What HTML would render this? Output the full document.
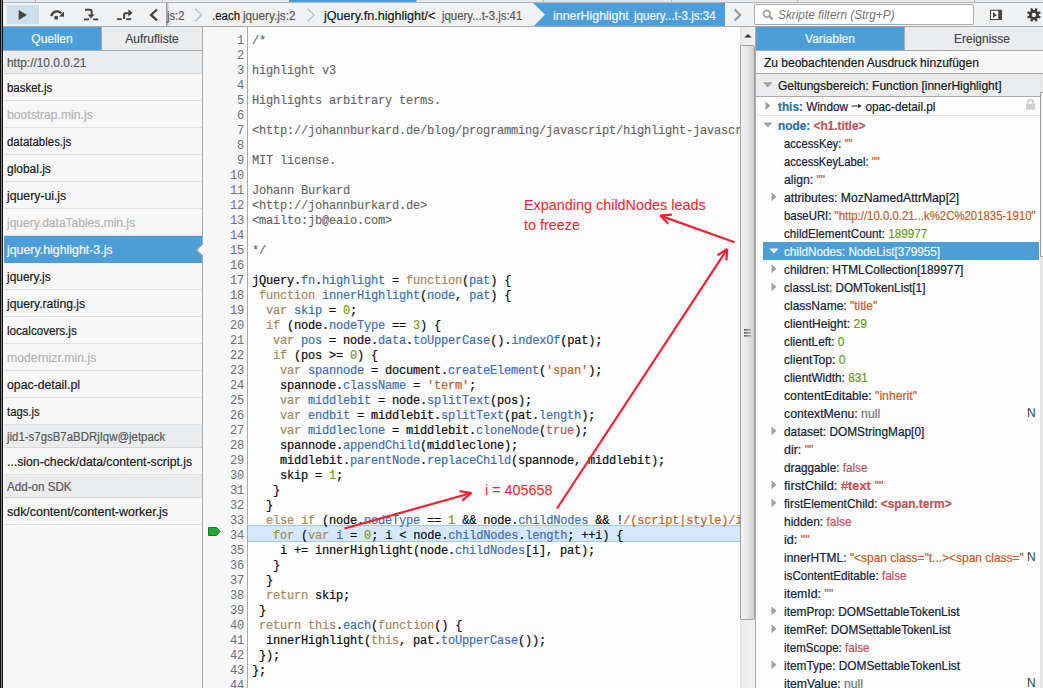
<!DOCTYPE html>
<html><head><meta charset="utf-8"><style>
*{margin:0;padding:0;box-sizing:border-box}
html,body{width:1043px;height:688px;overflow:hidden;background:#fcfcfc;font-family:"Liberation Sans",sans-serif;font-size:12px;color:#18191a}
.src,.grp,.row,.crumb,.tab{-webkit-text-stroke:0.2px currentColor}
.a{position:absolute}
#lb{left:0;top:0;width:3px;height:688px;background:linear-gradient(to right,#0a0a0a 0 1px,#8c8c8c 1px 2px,#0a0a0a 2px 3px)}
#strip{left:3px;top:0;width:1040px;height:3px;background:#e6e7e8;border-bottom:1px solid #b4b4b4}
.sep{top:0;width:1px;height:2px;background:#b8b8b8}
#tb{left:3px;top:3px;width:1040px;height:24px;background:#f0f1f2;border-bottom:1px solid #aaa}
#lp{left:3px;top:27px;width:200px;height:661px;background:#f7f7f7;border-right:1px solid #aaa}
.tab{top:0;height:24px;line-height:25px;text-align:center;background:#ebeced;border-bottom:1px solid #aaa;color:#45484c}
.tab.sel{background:#4c9ed9;color:#f5f7fa}
.src{left:0;width:199px;height:27px;line-height:28px;padding-left:4px;border-bottom:1px solid #e2e2e2;color:#18191a;white-space:nowrap}
.grp{left:0;width:199px;height:23px;line-height:24px;padding-left:4px;background:#ebeced;border-bottom:1px solid #d8d8d8;color:#585959;white-space:nowrap}
.src.sel{background:#4c9ed9;color:#f5f7fa;border-bottom-color:#4c9ed9}
.dim{color:#b4b4b4}
#gut{left:203px;top:27px;width:45px;height:661px;background:#f7f7f7;border-right:1px solid #aaa}
#code{left:248px;top:27px;width:492px;height:661px;background:#fcfcfc;overflow:hidden}
.mono{-webkit-text-stroke:0.2px currentColor;font-family:"Liberation Mono",monospace;font-size:12px;letter-spacing:-0.2px;white-space:pre;height:15px;line-height:15px}
.ln{left:0;width:41px;text-align:right;color:#667380;-webkit-text-stroke:0}
.cl{left:4px;color:#0c0c10}
.cm{color:#636363;-webkit-text-stroke:0.1px #636363}
.k{color:#a68a5b}
.p{color:#3e6fb4}
.n{color:#7d9a1e}
.s{color:#c05f2a}
.at{color:#bf5656}
#sb{left:740px;top:27px;width:15px;height:661px;background:linear-gradient(to right,#dedede 0,#ebebeb 2px,#efefef 50%,#f1f1f1 100%)}
#rp{left:755px;top:27px;width:288px;height:661px;background:#fcfcfc;border-left:1px solid #aaa}
.row{height:18px;line-height:20px;white-space:nowrap;font-size:11.9px}
.nm{color:#142038}
.vn{color:#2f70a8;font-weight:bold}
.dn{color:#bf5656;font-weight:bold}
.num{color:#6b9b22}
.str{color:#c3602a}
.bool{color:#c05560}
.nul{color:#757873}
.crumb{top:5px;height:23px;line-height:23px;white-space:nowrap}
.fl{color:#585959}
</style></head><body>
<div class="a" id="strip"></div>
<div class="a sep" style="left:35px"></div>
<div class="a sep" style="left:162px"></div>
<div class="a sep" style="left:289px"></div>
<div class="a sep" style="left:416px"></div>
<div class="a sep" style="left:543px"></div>
<div class="a sep" style="left:671px"></div>
<div class="a sep" style="left:797px"></div>
<div class="a sep" style="left:974px"></div>
<div class="a" style="left:289px;top:0;width:127px;height:2px;background:#4c9ed9"></div>
<div class="a" id="tb"></div>
<div class="a" style="left:7px;top:5px;width:32px;height:19px;background:#cddfed"></div>
<svg class="a" style="left:0;top:0" width="1043" height="27">
<g fill="#444">
<path d="M18.7 10 L18.7 20 L27 15 Z"/>
<circle cx="56.1" cy="17.8" r="2"/>
<path d="M51.2 16.3 A6 6 0 0 1 61.5 13.3" fill="none" stroke="#444" stroke-width="2.2"/>
<path d="M64 11.4 L64 16.7 L59 16.5 Z"/>
<path d="M85 9.7 L90 9.7 Q91.6 9.7 91.6 11.3 L91.6 15" fill="none" stroke="#444" stroke-width="2"/>
<path d="M87.4 14.4 L94.6 14.4 L91 18.2 Z"/>
<rect x="84" y="18.5" width="5" height="1.8"/>
<rect x="93.2" y="18.5" width="5" height="1.8"/>
<rect x="116.9" y="18.3" width="5" height="1.8"/>
<rect x="126.1" y="18.3" width="5" height="1.8"/>
<path d="M124.1 19 L124.1 14.5 Q124.1 13.3 125.5 13.3 L129 13.3" fill="none" stroke="#444" stroke-width="2"/>
<path d="M128.4 9.2 L132.6 12.9 L128.4 16.5 Z"/>
<path d="M157 9.5 L151 14.9 L157 20.4" fill="none" stroke="#444" stroke-width="2.2"/>
<path d="M734.6 9.3 L740.2 15 L734.6 20.7" fill="none" stroke="#999" stroke-width="2.1"/>
<path d="M195 8.5 L201.5 15 L195 21.5" fill="none" stroke="#bdbdbd" stroke-width="1.3"/>
<path d="M307.5 8.5 L314 15 L307.5 21.5" fill="none" stroke="#bdbdbd" stroke-width="1.3"/>
</g>
<rect x="990.5" y="10.3" width="11" height="9.2" fill="#fff" stroke="#4a4a45" stroke-width="1.1"/>
<rect x="998.2" y="10" width="3.5" height="9.8" fill="#4a4a45"/>
<path d="M993 12 L993 17.9 L996.8 14.9 Z" fill="#4a4a45"/>
</svg>
<svg class="a" style="left:0;top:0" width="1043" height="27"><path d="M1038.56 15.52 L1040.79 16.61 L1039.98 18.57 L1037.63 17.75 L1036.75 18.63 L1037.57 20.98 L1035.61 21.79 L1034.52 19.56 L1033.28 19.56 L1032.19 21.79 L1030.23 20.98 L1031.05 18.63 L1030.17 17.75 L1027.82 18.57 L1027.01 16.61 L1029.24 15.52 L1029.24 14.28 L1027.01 13.19 L1027.82 11.23 L1030.17 12.05 L1031.05 11.17 L1030.23 8.82 L1032.19 8.01 L1033.28 10.24 L1034.52 10.24 L1035.61 8.01 L1037.57 8.82 L1036.75 11.17 L1037.63 12.05 L1039.98 11.23 L1040.79 13.19 L1038.56 14.28 Z" fill="#3d3d3d"/><circle cx="1033.9" cy="14.9" r="4.9" fill="#3d3d3d"/><circle cx="1033.9" cy="14.9" r="2.2" fill="#f0f1f2"/></svg>
<div class="a" style="left:166px;top:3px;width:3px;height:23px;background:linear-gradient(to right,rgba(0,0,0,.42),rgba(0,0,0,0))"></div>
<div class="a crumb fl" style="left:166.5px;font-size:12px;transform:scaleX(0.933);transform-origin:0 0">js:2</div>
<div class="a crumb" style="left:211.5px;font-size:12px;transform:scaleX(0.958);transform-origin:0 0">.each</div>
<div class="a crumb fl" style="left:242.5px;font-size:12px;transform:scaleX(0.975);transform-origin:0 0">jquery.js:2</div>
<div class="a crumb" style="left:323.5px;font-size:12px;transform:scaleX(1.050);transform-origin:0 0">jQuery.fn.highlight/&lt;</div>
<div class="a crumb fl" style="left:442.3px;font-size:12px;transform:scaleX(0.950);transform-origin:0 0">jquery...t-3.js:41</div>
<svg class="a" style="left:533px;top:3px" width="192" height="23"><path d="M0 0 L192 0 L192 23 L1 23 L12 11.5 Z" fill="#4c9ed9"/></svg>
<div class="a crumb" style="left:553px;color:#f5f7fa;font-size:12px;transform:scaleX(1.033);transform-origin:0 0">innerHighlight</div>
<div class="a crumb" style="left:634.3px;color:#f5f7fa;font-size:12px;transform:scaleX(0.967);transform-origin:0 0">jquery...t-3.js:34</div>
<div class="a" style="left:754px;top:4px;width:220px;height:21px;background:#fff;border:1px solid #aaa;border-radius:2px"></div>
<svg class="a" style="left:760px;top:8px" width="16" height="14"><circle cx="6.8" cy="5.8" r="3.3" fill="none" stroke="#a3a3a3" stroke-width="1.8"/><path d="M9.2 8.2 L12.6 11.4" stroke="#a3a3a3" stroke-width="2.4"/></svg>
<div class="a" style="left:778px;top:5px;height:21px;line-height:21px;font-style:italic;color:#737373;white-space:nowrap;transform:scaleX(0.985);transform-origin:0 0">Skripte filtern (Strg+P)</div>
<div class="a" id="lp">
 <div class="a tab sel" style="left:0;width:98px">Quellen</div>
 <div class="a tab" style="left:98px;width:101px;border-left:1px solid #aaa">Aufrufliste</div>
 <div class="a grp" style="top:24px"><span style="display:inline-block;transform:scaleX(0.9912);transform-origin:0 0">http://10.0.0.21</span></div>
 <div class="a src" style="top:47px"><span style="display:inline-block;transform:scaleX(0.9532);transform-origin:0 0">basket.js</span></div>
 <div class="a src dim" style="top:74px"><span style="display:inline-block;transform:scaleX(1.0118);transform-origin:0 0">bootstrap.min.js</span></div>
 <div class="a src" style="top:101px"><span style="display:inline-block;transform:scaleX(0.9544);transform-origin:0 0">datatables.js</span></div>
 <div class="a src" style="top:128px"><span style="display:inline-block;transform:scaleX(0.9955);transform-origin:0 0">global.js</span></div>
 <div class="a src" style="top:155px"><span style="display:inline-block;transform:scaleX(1.0203);transform-origin:0 0">jquery-ui.js</span></div>
 <div class="a src dim" style="top:182px"><span style="display:inline-block;transform:scaleX(1.0016);transform-origin:0 0">jquery.dataTables.min.js</span></div>
 <div class="a src sel" style="top:209px"><span style="display:inline-block;transform:scaleX(1.0298);transform-origin:0 0">jquery.highlight-3.js</span></div>
 <div class="a src" style="top:236px"><span style="display:inline-block;transform:scaleX(0.9956);transform-origin:0 0">jquery.js</span></div>
 <div class="a src" style="top:263px"><span style="display:inline-block;transform:scaleX(1.0115);transform-origin:0 0">jquery.rating.js</span></div>
 <div class="a src" style="top:290px"><span style="display:inline-block;transform:scaleX(0.9681);transform-origin:0 0">localcovers.js</span></div>
 <div class="a src dim" style="top:317px"><span style="display:inline-block;transform:scaleX(1.0221);transform-origin:0 0">modernizr.min.js</span></div>
 <div class="a src" style="top:344px"><span style="display:inline-block;transform:scaleX(1.0225);transform-origin:0 0">opac-detail.pl</span></div>
 <div class="a src" style="top:371px"><span style="display:inline-block;transform:scaleX(0.9417);transform-origin:0 0">tags.js</span></div>
 <div class="a grp" style="top:398px"><span style="display:inline-block;transform:scaleX(0.9518);transform-origin:0 0">jid1-s7gsB7aBDRjIqw@jetpack</span></div>
 <div class="a src" style="top:421px"><span style="display:inline-block;transform:scaleX(1.0203);transform-origin:0 0">...sion-check/data/content-script.js</span></div>
 <div class="a grp" style="top:448px"><span style="display:inline-block;transform:scaleX(0.9687);transform-origin:0 0">Add-on SDK</span></div>
 <div class="a src" style="top:471px"><span style="display:inline-block;transform:scaleX(1.0365);transform-origin:0 0">sdk/content/content-worker.js</span></div>
</div>
<svg class="a" style="left:195px;top:243px" width="9" height="14"><path d="M8 0.5 L1.5 7 L8 13.5" fill="#fcfcfc" stroke="#9a9a9a" stroke-width="1.1"/><rect x="8" y="0" width="1" height="14" fill="#fcfcfc"/></svg>
<div class="a" id="gut"></div>
<div class="a" style="left:248px;top:525px;width:492px;height:17px;background:#d5e7fa;border-top:1px solid #9ccaf0;border-bottom:1px solid #9ccaf0"></div>
<div class="a mono ln" style="left:203px;top:34px">1</div>
<div class="a mono cl cm" style="left:252px;top:34px;max-width:488px;overflow:hidden">/*</div>
<div class="a mono ln" style="left:203px;top:49px">2</div>
<div class="a mono cl cm" style="left:252px;top:49px;max-width:488px;overflow:hidden"></div>
<div class="a mono ln" style="left:203px;top:64px">3</div>
<div class="a mono cl cm" style="left:252px;top:64px;max-width:488px;overflow:hidden">highlight v3</div>
<div class="a mono ln" style="left:203px;top:79px">4</div>
<div class="a mono cl cm" style="left:252px;top:79px;max-width:488px;overflow:hidden"></div>
<div class="a mono ln" style="left:203px;top:94px">5</div>
<div class="a mono cl cm" style="left:252px;top:94px;max-width:488px;overflow:hidden">Highlights arbitrary terms.</div>
<div class="a mono ln" style="left:203px;top:109px">6</div>
<div class="a mono cl cm" style="left:252px;top:109px;max-width:488px;overflow:hidden"></div>
<div class="a mono ln" style="left:203px;top:124px">7</div>
<div class="a mono cl cm" style="left:252px;top:124px;max-width:488px;overflow:hidden">&lt;http://johannburkard.de/blog/programming/javascript/highlight-javascript-text-higlighting-jquery-plugin.html&gt;</div>
<div class="a mono ln" style="left:203px;top:139px">8</div>
<div class="a mono cl cm" style="left:252px;top:139px;max-width:488px;overflow:hidden"></div>
<div class="a mono ln" style="left:203px;top:154px">9</div>
<div class="a mono cl cm" style="left:252px;top:154px;max-width:488px;overflow:hidden">MIT license.</div>
<div class="a mono ln" style="left:203px;top:169px">10</div>
<div class="a mono cl cm" style="left:252px;top:169px;max-width:488px;overflow:hidden"></div>
<div class="a mono ln" style="left:203px;top:184px">11</div>
<div class="a mono cl cm" style="left:252px;top:184px;max-width:488px;overflow:hidden">Johann Burkard</div>
<div class="a mono ln" style="left:203px;top:199px">12</div>
<div class="a mono cl cm" style="left:252px;top:199px;max-width:488px;overflow:hidden">&lt;http://johannburkard.de&gt;</div>
<div class="a mono ln" style="left:203px;top:214px">13</div>
<div class="a mono cl cm" style="left:252px;top:214px;max-width:488px;overflow:hidden">&lt;mailto:jb@eaio.com&gt;</div>
<div class="a mono ln" style="left:203px;top:229px">14</div>
<div class="a mono cl cm" style="left:252px;top:229px;max-width:488px;overflow:hidden"></div>
<div class="a mono ln" style="left:203px;top:244px">15</div>
<div class="a mono cl cm" style="left:252px;top:244px;max-width:488px;overflow:hidden">*/</div>
<div class="a mono ln" style="left:203px;top:259px">16</div>
<div class="a mono cl" style="left:252px;top:259px;max-width:488px;overflow:hidden"></div>
<div class="a mono ln" style="left:203px;top:274px">17</div>
<div class="a mono cl" style="left:252px;top:274px;max-width:488px;overflow:hidden">jQuery.<span class="p">fn</span>.<span class="p">highlight</span> = <span class="k">function</span>(<span class="p">pat</span>) {</div>
<div class="a mono ln" style="left:203px;top:289px">18</div>
<div class="a mono cl" style="left:252px;top:289px;max-width:488px;overflow:hidden"> <span class="k">function</span> <span class="p">innerHighlight</span>(<span class="p">node</span>, <span class="p">pat</span>) {</div>
<div class="a mono ln" style="left:203px;top:304px">19</div>
<div class="a mono cl" style="left:252px;top:304px;max-width:488px;overflow:hidden">  <span class="k">var</span> <span class="p">skip</span> = <span class="n">0</span>;</div>
<div class="a mono ln" style="left:203px;top:319px">20</div>
<div class="a mono cl" style="left:252px;top:319px;max-width:488px;overflow:hidden">  <span class="k">if</span> (node.<span class="p">nodeType</span> == <span class="n">3</span>) {</div>
<div class="a mono ln" style="left:203px;top:334px">21</div>
<div class="a mono cl" style="left:252px;top:334px;max-width:488px;overflow:hidden">   <span class="k">var</span> <span class="p">pos</span> = node.<span class="p">data</span>.<span class="p">toUpperCase</span>().<span class="p">indexOf</span>(pat);</div>
<div class="a mono ln" style="left:203px;top:349px">22</div>
<div class="a mono cl" style="left:252px;top:349px;max-width:488px;overflow:hidden">   <span class="k">if</span> (pos &gt;= <span class="n">0</span>) {</div>
<div class="a mono ln" style="left:203px;top:364px">23</div>
<div class="a mono cl" style="left:252px;top:364px;max-width:488px;overflow:hidden">    <span class="k">var</span> <span class="p">spannode</span> = document.<span class="p">createElement</span>(<span class="s">&#x27;span&#x27;</span>);</div>
<div class="a mono ln" style="left:203px;top:379px">24</div>
<div class="a mono cl" style="left:252px;top:379px;max-width:488px;overflow:hidden">    spannode.<span class="p">className</span> = <span class="s">&#x27;term&#x27;</span>;</div>
<div class="a mono ln" style="left:203px;top:394px">25</div>
<div class="a mono cl" style="left:252px;top:394px;max-width:488px;overflow:hidden">    <span class="k">var</span> <span class="p">middlebit</span> = node.<span class="p">splitText</span>(pos);</div>
<div class="a mono ln" style="left:203px;top:409px">26</div>
<div class="a mono cl" style="left:252px;top:409px;max-width:488px;overflow:hidden">    <span class="k">var</span> <span class="p">endbit</span> = middlebit.<span class="p">splitText</span>(pat.<span class="p">length</span>);</div>
<div class="a mono ln" style="left:203px;top:424px">27</div>
<div class="a mono cl" style="left:252px;top:424px;max-width:488px;overflow:hidden">    <span class="k">var</span> <span class="p">middleclone</span> = middlebit.<span class="p">cloneNode</span>(<span class="at">true</span>);</div>
<div class="a mono ln" style="left:203px;top:439px">28</div>
<div class="a mono cl" style="left:252px;top:439px;max-width:488px;overflow:hidden">    spannode.<span class="p">appendChild</span>(middleclone);</div>
<div class="a mono ln" style="left:203px;top:454px">29</div>
<div class="a mono cl" style="left:252px;top:454px;max-width:488px;overflow:hidden">    middlebit.<span class="p">parentNode</span>.<span class="p">replaceChild</span>(spannode, middlebit);</div>
<div class="a mono ln" style="left:203px;top:469px">30</div>
<div class="a mono cl" style="left:252px;top:469px;max-width:488px;overflow:hidden">    skip = <span class="n">1</span>;</div>
<div class="a mono ln" style="left:203px;top:484px">31</div>
<div class="a mono cl" style="left:252px;top:484px;max-width:488px;overflow:hidden">   }</div>
<div class="a mono ln" style="left:203px;top:499px">32</div>
<div class="a mono cl" style="left:252px;top:499px;max-width:488px;overflow:hidden">  }</div>
<div class="a mono ln" style="left:203px;top:514px">33</div>
<div class="a mono cl" style="left:252px;top:514px;max-width:488px;overflow:hidden">  <span class="k">else</span> <span class="k">if</span> (node.<span class="p">nodeType</span> == <span class="n">1</span> &amp;&amp; node.<span class="p">childNodes</span> &amp;&amp; !<span class="s">/(script|style)/i</span>.<span class="p">test</span>(node.<span class="p">tagName</span>)) {</div>
<div class="a mono ln" style="left:203px;top:529px">34</div>
<div class="a mono cl" style="left:252px;top:529px;max-width:488px;overflow:hidden">   <span class="k">for</span> (<span class="k">var</span> <span class="p">i</span> = <span class="n">0</span>; i &lt; node.<span class="p">childNodes</span>.<span class="p">length</span>; ++i) {</div>
<div class="a mono ln" style="left:203px;top:544px">35</div>
<div class="a mono cl" style="left:252px;top:544px;max-width:488px;overflow:hidden">    i += innerHighlight(node.<span class="p">childNodes</span>[i], pat);</div>
<div class="a mono ln" style="left:203px;top:559px">36</div>
<div class="a mono cl" style="left:252px;top:559px;max-width:488px;overflow:hidden">   }</div>
<div class="a mono ln" style="left:203px;top:574px">37</div>
<div class="a mono cl" style="left:252px;top:574px;max-width:488px;overflow:hidden">  }</div>
<div class="a mono ln" style="left:203px;top:589px">38</div>
<div class="a mono cl" style="left:252px;top:589px;max-width:488px;overflow:hidden">  <span class="k">return</span> skip;</div>
<div class="a mono ln" style="left:203px;top:604px">39</div>
<div class="a mono cl" style="left:252px;top:604px;max-width:488px;overflow:hidden"> }</div>
<div class="a mono ln" style="left:203px;top:619px">40</div>
<div class="a mono cl" style="left:252px;top:619px;max-width:488px;overflow:hidden"> <span class="k">return</span> <span class="k">this</span>.<span class="p">each</span>(<span class="k">function</span>() {</div>
<div class="a mono ln" style="left:203px;top:634px">41</div>
<div class="a mono cl" style="left:252px;top:634px;max-width:488px;overflow:hidden">  innerHighlight(<span class="k">this</span>, pat.<span class="p">toUpperCase</span>());</div>
<div class="a mono ln" style="left:203px;top:649px">42</div>
<div class="a mono cl" style="left:252px;top:649px;max-width:488px;overflow:hidden"> });</div>
<div class="a mono ln" style="left:203px;top:664px">43</div>
<div class="a mono cl" style="left:252px;top:664px;max-width:488px;overflow:hidden">};</div>
<div class="a mono ln" style="left:203px;top:679px">44</div>
<div class="a mono cl" style="left:252px;top:679px;max-width:488px;overflow:hidden"></div>
<svg class="a" style="left:207px;top:526px" width="16" height="12"><path d="M1.5 1.5 L9.5 1.5 L13 5.5 L9.5 9.5 L1.5 9.5 Z" fill="#22a832" stroke="#0e7f1c" stroke-width="1"/></svg>
<div class="a" id="sb"></div>
<svg class="a" style="left:740px;top:27px" width="15" height="18"><path d="M4.3 10.5 L8 7 L11.7 10.5 Z" fill="#333"/></svg>
<div class="a" style="left:740px;top:45px;width:15px;height:575px;border:1px solid #a0a0a0;border-radius:2px;background:linear-gradient(to right,#f4f4f4,#e6e6e6 50%,#cfcfcf)"></div>
<svg class="a" style="left:740px;top:327px" width="15" height="12"><defs><linearGradient id="gg"><stop offset="0" stop-color="#333"/><stop offset="1" stop-color="#aaa"/></linearGradient></defs><g fill="url(#gg)"><rect x="4" y="2.2" width="7" height="1.3"/><rect x="4" y="5.2" width="7" height="1.3"/><rect x="4" y="8.2" width="7" height="1.3"/></g></svg>
<div class="a" id="rp">
 <div class="a tab sel" style="left:0;width:148px">Variablen</div>
 <div class="a tab" style="left:148px;width:139px;border-left:1px solid #aaa;padding-left:16px">Ereignisse</div>
 <div class="a row" style="left:0;top:24px;width:287px;height:23px;line-height:24px;font-size:12px;background:#f7f7f7;border-bottom:1px solid #aaa;padding-left:8px;color:#18191a">Zu beobachtenden Ausdruck hinzufügen</div>
 <div class="a row" style="left:0;top:47px;width:284px;height:23px;line-height:24px;font-size:12px;background:#ebeced;border-bottom:1px solid #aaa;padding-left:22px;color:#18191a">Geltungsbereich: Function [innerHighlight]</div>
</div>
<svg class="a" style="left:756px;top:74px" width="30" height="60"><path d="M6.8 8.2 L16.6 8.2 L11.7 13.6 Z" fill="#a0a0a0"/></svg>
<div class="a" style="left:756px;top:115px;width:284px;height:1px;background:#e0e0e0"></div>
<div class="a row" style="left:778px;top:97px;width:261px;overflow:hidden"><span style="display:inline-block;transform:scaleX(0.9900);transform-origin:0 0"><span class="vn">this:</span><span class="nm"> Window <svg width="11" height="8" style="vertical-align:1px"><path d="M0 4 L9 4" stroke="#1e2b45" stroke-width="1.2"/><path d="M7 1.8 L10.5 4 L7 6.2 Z" fill="#1e2b45"/></svg> opac-detail.pl</span></span></div>
<svg class="a" style="left:765px;top:101px" width="8" height="10"><path d="M0.5 0.5 L5.5 4.8 L0.5 9.2 Z" fill="#a0a0a0"/></svg>
<div class="a row" style="left:778px;top:116px;width:261px;overflow:hidden"><span style="display:inline-block;transform:scaleX(0.9942);transform-origin:0 0"><span class="vn">node:</span><span class="nm"> </span><span class="dn">&lt;h1.title&gt;</span></span></div>
<svg class="a" style="left:763px;top:122px" width="10" height="7"><path d="M0.3 0.5 L9.5 0.5 L4.9 5.5 Z" fill="#a0a0a0"/></svg>
<div class="a row" style="left:784px;top:134px;width:255px;overflow:hidden"><span style="display:inline-block;transform:scaleX(0.9431);transform-origin:0 0"><span class="nm">accessKey: </span><span class="str">""</span></span></div>
<div class="a row" style="left:784px;top:152px;width:255px;overflow:hidden"><span style="display:inline-block;transform:scaleX(0.9412);transform-origin:0 0"><span class="nm">accessKeyLabel: </span><span class="str">""</span></span></div>
<div class="a row" style="left:784px;top:170px;width:255px;overflow:hidden"><span style="display:inline-block;transform:scaleX(1.0250);transform-origin:0 0"><span class="nm">align: </span><span class="str">""</span></span></div>
<div class="a row" style="left:784px;top:188px;width:255px;overflow:hidden"><span style="display:inline-block;transform:scaleX(1.0234);transform-origin:0 0"><span class="nm">attributes: MozNamedAttrMap[2]</span></span></div>
<svg class="a" style="left:771px;top:192px" width="8" height="10"><path d="M0.5 0.5 L5.5 4.8 L0.5 9.2 Z" fill="#a0a0a0"/></svg>
<div class="a row" style="left:784px;top:206px;width:255px;overflow:hidden"><span style="display:inline-block;transform:scaleX(0.9570);transform-origin:0 0"><span class="nm">baseURI: </span><span class="str">"http://10.0.0.21...k%2C%201835-1910"</span></span></div>
<div class="a row" style="left:784px;top:224px;width:255px;overflow:hidden"><span style="display:inline-block;transform:scaleX(0.9801);transform-origin:0 0"><span class="nm">childElementCount: </span><span class="num">189977</span></span></div>
<div class="a" style="left:763px;top:242px;width:276px;height:18px;background:#4c9ed9"></div>
<div class="a row" style="left:784px;top:242px;width:255px;overflow:hidden"><span style="display:inline-block;transform:scaleX(0.9840);transform-origin:0 0"><span style="color:#f5f7fa"><span>childNodes: NodeList[379955]</span></span></span></div>
<svg class="a" style="left:769px;top:248px" width="10" height="7"><path d="M0.3 0.5 L9.5 0.5 L4.9 5.5 Z" fill="#f5f7fa"/></svg>
<div class="a row" style="left:784px;top:260px;width:255px;overflow:hidden"><span style="display:inline-block;transform:scaleX(1.0011);transform-origin:0 0"><span class="nm">children: HTMLCollection[189977]</span></span></div>
<svg class="a" style="left:771px;top:264px" width="8" height="10"><path d="M0.5 0.5 L5.5 4.8 L0.5 9.2 Z" fill="#a0a0a0"/></svg>
<div class="a row" style="left:784px;top:278px;width:255px;overflow:hidden"><span style="display:inline-block;transform:scaleX(0.9860);transform-origin:0 0"><span class="nm">classList: DOMTokenList[1]</span></span></div>
<svg class="a" style="left:771px;top:282px" width="8" height="10"><path d="M0.5 0.5 L5.5 4.8 L0.5 9.2 Z" fill="#a0a0a0"/></svg>
<div class="a row" style="left:784px;top:296px;width:255px;overflow:hidden"><span style="display:inline-block;transform:scaleX(1.0087);transform-origin:0 0"><span class="nm">className: </span><span class="str">"title"</span></span></div>
<div class="a row" style="left:784px;top:314px;width:255px;overflow:hidden"><span style="display:inline-block;transform:scaleX(1.0110);transform-origin:0 0"><span class="nm">clientHeight: </span><span class="num">29</span></span></div>
<div class="a row" style="left:784px;top:332px;width:255px;overflow:hidden"><span style="display:inline-block;transform:scaleX(0.9934);transform-origin:0 0"><span class="nm">clientLeft: </span><span class="num">0</span></span></div>
<div class="a row" style="left:784px;top:350px;width:255px;overflow:hidden"><span style="display:inline-block;transform:scaleX(1.0233);transform-origin:0 0"><span class="nm">clientTop: </span><span class="num">0</span></span></div>
<div class="a row" style="left:784px;top:368px;width:255px;overflow:hidden"><span style="display:inline-block;transform:scaleX(0.9906);transform-origin:0 0"><span class="nm">clientWidth: </span><span class="num">831</span></span></div>
<div class="a row" style="left:784px;top:386px;width:255px;overflow:hidden"><span style="display:inline-block;transform:scaleX(1.0279);transform-origin:0 0"><span class="nm">contentEditable: </span><span class="str">"inherit"</span></span></div>
<div class="a row" style="left:784px;top:404px;width:255px;overflow:hidden"><span style="display:inline-block;transform:scaleX(1.0323);transform-origin:0 0"><span class="nm">contextMenu: </span><span class="nul">null</span></span></div>
<div class="a" style="left:1027px;top:403px;height:18px;line-height:20px;font-size:11.9px;color:#3a3a4a">N</div>
<div class="a row" style="left:784px;top:422px;width:255px;overflow:hidden"><span style="display:inline-block;transform:scaleX(0.9965);transform-origin:0 0"><span class="nm">dataset: DOMStringMap[0]</span></span></div>
<svg class="a" style="left:771px;top:426px" width="8" height="10"><path d="M0.5 0.5 L5.5 4.8 L0.5 9.2 Z" fill="#a0a0a0"/></svg>
<div class="a row" style="left:784px;top:440px;width:255px;overflow:hidden"><span style="display:inline-block;transform:scaleX(1.0429);transform-origin:0 0"><span class="nm">dir: </span><span class="str">""</span></span></div>
<div class="a row" style="left:784px;top:458px;width:255px;overflow:hidden"><span style="display:inline-block;transform:scaleX(0.9869);transform-origin:0 0"><span class="nm">draggable: </span><span class="bool">false</span></span></div>
<div class="a row" style="left:784px;top:476px;width:255px;overflow:hidden"><span style="display:inline-block;transform:scaleX(1.0772);transform-origin:0 0"><span class="nm">firstChild: </span><span class="dn">#text</span> <span class="str">""</span></span></div>
<svg class="a" style="left:771px;top:480px" width="8" height="10"><path d="M0.5 0.5 L5.5 4.8 L0.5 9.2 Z" fill="#a0a0a0"/></svg>
<div class="a row" style="left:784px;top:494px;width:255px;overflow:hidden"><span style="display:inline-block;transform:scaleX(1.0024);transform-origin:0 0"><span class="nm">firstElementChild: </span><span class="dn">&lt;span.term&gt;</span></span></div>
<svg class="a" style="left:771px;top:498px" width="8" height="10"><path d="M0.5 0.5 L5.5 4.8 L0.5 9.2 Z" fill="#a0a0a0"/></svg>
<div class="a row" style="left:784px;top:512px;width:255px;overflow:hidden"><span style="display:inline-block;transform:scaleX(1.0030);transform-origin:0 0"><span class="nm">hidden: </span><span class="bool">false</span></span></div>
<div class="a row" style="left:784px;top:530px;width:255px;overflow:hidden"><span style="display:inline-block;transform:scaleX(1.0542);transform-origin:0 0"><span class="nm">id: </span><span class="str">""</span></span></div>
<div class="a row" style="left:784px;top:548px;width:255px;overflow:hidden"><span style="display:inline-block;transform:scaleX(1.0059);transform-origin:0 0"><span class="nm">innerHTML: </span><span class="str">"&lt;span class="t...&gt;&lt;span class="</span></span></div>
<div class="a" style="left:1027px;top:547px;height:18px;line-height:20px;font-size:11.9px;color:#3a3a4a">N</div>
<div class="a row" style="left:784px;top:566px;width:255px;overflow:hidden"><span style="display:inline-block;transform:scaleX(0.9808);transform-origin:0 0"><span class="nm">isContentEditable: </span><span class="bool">false</span></span></div>
<div class="a row" style="left:784px;top:584px;width:255px;overflow:hidden"><span style="display:inline-block;transform:scaleX(1.0383);transform-origin:0 0"><span class="nm">itemId: </span><span class="str">""</span></span></div>
<div class="a row" style="left:784px;top:602px;width:255px;overflow:hidden"><span style="display:inline-block;transform:scaleX(0.9989);transform-origin:0 0"><span class="nm">itemProp: DOMSettableTokenList</span></span></div>
<svg class="a" style="left:771px;top:606px" width="8" height="10"><path d="M0.5 0.5 L5.5 4.8 L0.5 9.2 Z" fill="#a0a0a0"/></svg>
<div class="a row" style="left:784px;top:620px;width:255px;overflow:hidden"><span style="display:inline-block;transform:scaleX(0.9847);transform-origin:0 0"><span class="nm">itemRef: DOMSettableTokenList</span></span></div>
<svg class="a" style="left:771px;top:624px" width="8" height="10"><path d="M0.5 0.5 L5.5 4.8 L0.5 9.2 Z" fill="#a0a0a0"/></svg>
<div class="a row" style="left:784px;top:638px;width:255px;overflow:hidden"><span style="display:inline-block;transform:scaleX(0.9716);transform-origin:0 0"><span class="nm">itemScope: </span><span class="bool">false</span></span></div>
<div class="a row" style="left:784px;top:656px;width:255px;overflow:hidden"><span style="display:inline-block;transform:scaleX(0.9977);transform-origin:0 0"><span class="nm">itemType: DOMSettableTokenList</span></span></div>
<svg class="a" style="left:771px;top:660px" width="8" height="10"><path d="M0.5 0.5 L5.5 4.8 L0.5 9.2 Z" fill="#a0a0a0"/></svg>
<div class="a row" style="left:784px;top:674px;width:255px;overflow:hidden"><span style="display:inline-block;transform:scaleX(1.0247);transform-origin:0 0"><span class="nm">itemValue: </span><span class="nul">null</span></span></div>
<div class="a" style="left:1027px;top:673px;height:18px;line-height:20px;font-size:11.9px;color:#3a3a4a">N</div>
<svg class="a" style="left:1025px;top:98px" width="11" height="13"><path d="M3 6 L3 4.5 A2.6 2.6 0 0 1 8.2 4.5 L8.2 6" fill="none" stroke="#cfcfcf" stroke-width="1.6"/><rect x="1" y="6" width="9.2" height="5.6" fill="#cfcfcf"/></svg>
<div class="a" style="left:1040px;top:74px;width:3px;height:614px;background:linear-gradient(to right,#e2e2e2,#eeeeee)"></div>
<div class="a" style="left:1040px;top:92px;width:4px;height:165px;background:#fafafa;border:1px solid #999;border-right:none;border-radius:2px 0 0 2px"></div>
<svg class="a" style="left:0;top:0" width="1043" height="688">
<g stroke="#f8202f" stroke-width="2.2" fill="none" stroke-linecap="butt" stroke-linejoin="miter">
<path d="M734.6 242.3 L660.2 215.6"/><path d="M660.2 215.6 L668.3 223.8"/><path d="M660.2 215.6 L671.8 214.7"/>
<path d="M557 508.5 L727.3 249"/><path d="M727.3 249 L717.6 255.2"/><path d="M727.3 249 L726.3 260.3"/>
<path d="M344.5 528.5 L471.4 493"/><path d="M471.4 493 L459.5 491.2"/><path d="M471.4 493 L462.2 500.6"/>
</g>
</svg>
<div class="a" style="left:524px;top:195px;font-size:14.4px;line-height:20px;color:#f8202f;white-space:nowrap">Expanding childNodes leads<br>to freeze</div>
<div class="a" style="left:485px;top:480px;font-size:14.4px;line-height:20px;color:#f8202f;white-space:nowrap">i = 405658</div>
<div class="a" id="lb"></div>
<div class="a" style="left:3px;top:51px;width:1px;height:637px;background:#fbfbfb"></div>
</body></html>
